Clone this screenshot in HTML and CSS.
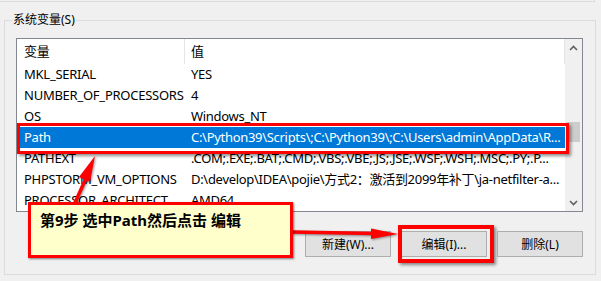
FILE: index.html
```html
<!DOCTYPE html>
<html lang="zh-CN">
<head>
  <meta charset="UTF-8">
  <meta name="viewport" content="width=device-width, initial-scale=1.0">
  <title>系统变量</title>
  <link rel="stylesheet" href="styles.css">
</head>
<body>
  <div class="prev-group"></div>

  <fieldset class="sys-group">
    <legend>系统变量(S)</legend>

    <div class="listbox">
      <div class="list">
        <div class="row head">
          <span class="name">变量</span>
          <span class="value">值</span>
        </div>
        <div class="row"><span class="name">MKL_SERIAL</span><span class="value">YES</span></div>
        <div class="row"><span class="name">NUMBER_OF_PROCESSORS</span><span class="value">4</span></div>
        <div class="row"><span class="name">OS</span><span class="value">Windows_NT</span></div>
        <div class="row selected">
          <span class="name">Path</span>
          <span class="value">C:\Python39\Scripts\;C:\Python39\;C:\Users\admin\AppData\R...</span>
          <span class="mark"></span>
        </div>
        <div class="row"><span class="name">PATHEXT</span><span class="value">.COM;.EXE;.BAT;.CMD;.VBS;.VBE;.JS;.JSE;.WSF;.WSH;.MSC;.PY;.P...</span></div>
        <div class="row"><span class="name">PHPSTORM_VM_OPTIONS</span><span class="value">D:\develop\IDEA\pojie\方式2：激活到2099年补丁\ja-netfilter-a...</span></div>
        <div class="row"><span class="name">PROCESSOR_ARCHITECT...</span><span class="value">AMD64</span></div>
      </div>

      <div class="scrollbar">
        <div class="sb-btn">
          <svg width="9" height="6" viewBox="0 0 9 6"><polyline points="1,5 4.5,1.5 8,5" /></svg>
        </div>
        <div class="sb-track"><div class="sb-thumb"></div></div>
        <div class="sb-btn">
          <svg width="9" height="6" viewBox="0 0 9 6"><polyline points="1,1 4.5,4.5 8,1" /></svg>
        </div>
      </div>
    </div>

    <div class="buttons">
      <button>新建(W)...</button>
      <button class="edit">编辑(I)...<span class="mark"></span></button>
      <button>删除(L)</button>
    </div>
  </fieldset>

  <!-- tutorial annotation -->
  <svg class="arrows" width="601" height="281" viewBox="0 0 601 281">
    <line x1="70" y1="214" x2="87" y2="176" />
    <polygon points="95,156 90,182 79,177" />
    <line x1="292" y1="232" x2="374" y2="233.5" />
    <polygon points="398,234 371,228.5 371,239" />
  </svg>

  <div class="callout">第9步 选中Path然后点击 编辑</div>
</body>
</html>
```

FILE: styles.css
```css
body {
  margin: 0;
  width: 601px;
  height: 281px;
  overflow: hidden;
  background: #f0f0f0;
  font-family: "Noto Sans", "Noto Sans CJK SC", sans-serif;
  font-size: 12px;
  color: #000;
  position: relative;
}

.prev-group {
  height: 1px;
  margin-right: 6px;
  border-bottom: 1px solid #dcdcdc;
  border-right: 1px solid #dcdcdc;
}

.sys-group {
  margin: 9px 5px 0 4px;
  padding: 0 12px 16px 11px;
  border: 1px solid #dcdcdc;
  height: 264px;
  box-sizing: border-box;
}

.sys-group legend {
  margin-left: -4px;
  padding: 0 1px;
  line-height: 18px;
}

.listbox {
  display: flex;
  margin-top: 9px;
  height: 174px;
  box-sizing: border-box;
  border: 1px solid #828790;
  background: #fff;
}

.list {
  flex: 1;
  min-width: 0;
  font-size: 13px;
}

.row {
  position: relative;
  display: flex;
  height: 21px;
  line-height: 21px;
  white-space: nowrap;
}

.row .name {
  width: 168px;
  flex: none;
  padding-left: 7px;
  box-sizing: border-box;
  overflow: hidden;
  letter-spacing: -0.25px;
}

.row .value {
  flex: 1;
  padding-left: 6px;
  overflow: hidden;
  letter-spacing: -0.3px;
}

.row.head {
  height: 25px;
  line-height: 24px;
}

.row.head .name {
  border-right: 1px solid #e5e5e5;
}

.row.head .value {
  border-right: 1px solid #e5e5e5;
}

.row.selected {
  background: #0078d7;
  color: #fff;
}

.mark {
  position: absolute;
  border: 3px solid #ff0000;
  box-shadow: 2px 2px 3px rgba(0, 0, 0, 0.45);
  pointer-events: none;
}

.row .mark {
  left: 0;
  top: -4px;
  right: -4px;
  bottom: -6px;
}

.scrollbar {
  width: 17px;
  display: flex;
  flex-direction: column;
  background: #f0f0f0;
}

.sb-btn {
  height: 17px;
  display: flex;
  align-items: center;
  justify-content: center;
}

.sb-btn svg polyline {
  fill: none;
  stroke: #606060;
  stroke-width: 1.6;
}

.sb-track {
  flex: 1;
  padding-top: 66px;
}

.sb-thumb {
  height: 20px;
  margin: 0 2px;
  background: #cdcdcd;
}

.buttons {
  display: flex;
  justify-content: flex-end;
  gap: 10px;
  margin-top: 19px;
}

.buttons button {
  position: relative;
  width: 86px;
  height: 26px;
  padding: 0;
  background: #e1e1e1;
  border: 1px solid #adadad;
  font-family: inherit;
  font-size: 12px;
  color: #000;
}

.buttons .mark {
  left: -4px;
  top: -7px;
  right: -8px;
  bottom: -7px;
  border-width: 4px;
}

.arrows {
  position: absolute;
  left: 0;
  top: 0;
  pointer-events: none;
  filter: drop-shadow(1px 1px 1px rgba(0, 0, 0, 0.4));
}

.arrows line {
  stroke: #ff0000;
  stroke-width: 3.5;
}

.arrows polygon {
  fill: #ff0000;
}

.callout {
  position: absolute;
  left: 28px;
  top: 202px;
  width: 265px;
  height: 56px;
  box-sizing: border-box;
  padding: 5px 0 0 9px;
  border: 3px solid #ff0000;
  background: #ffffcc;
  box-shadow: 1px 1px 2px rgba(0, 0, 0, 0.5);
  font-size: 15px;
  font-weight: bold;
  line-height: 20px;
}
```
